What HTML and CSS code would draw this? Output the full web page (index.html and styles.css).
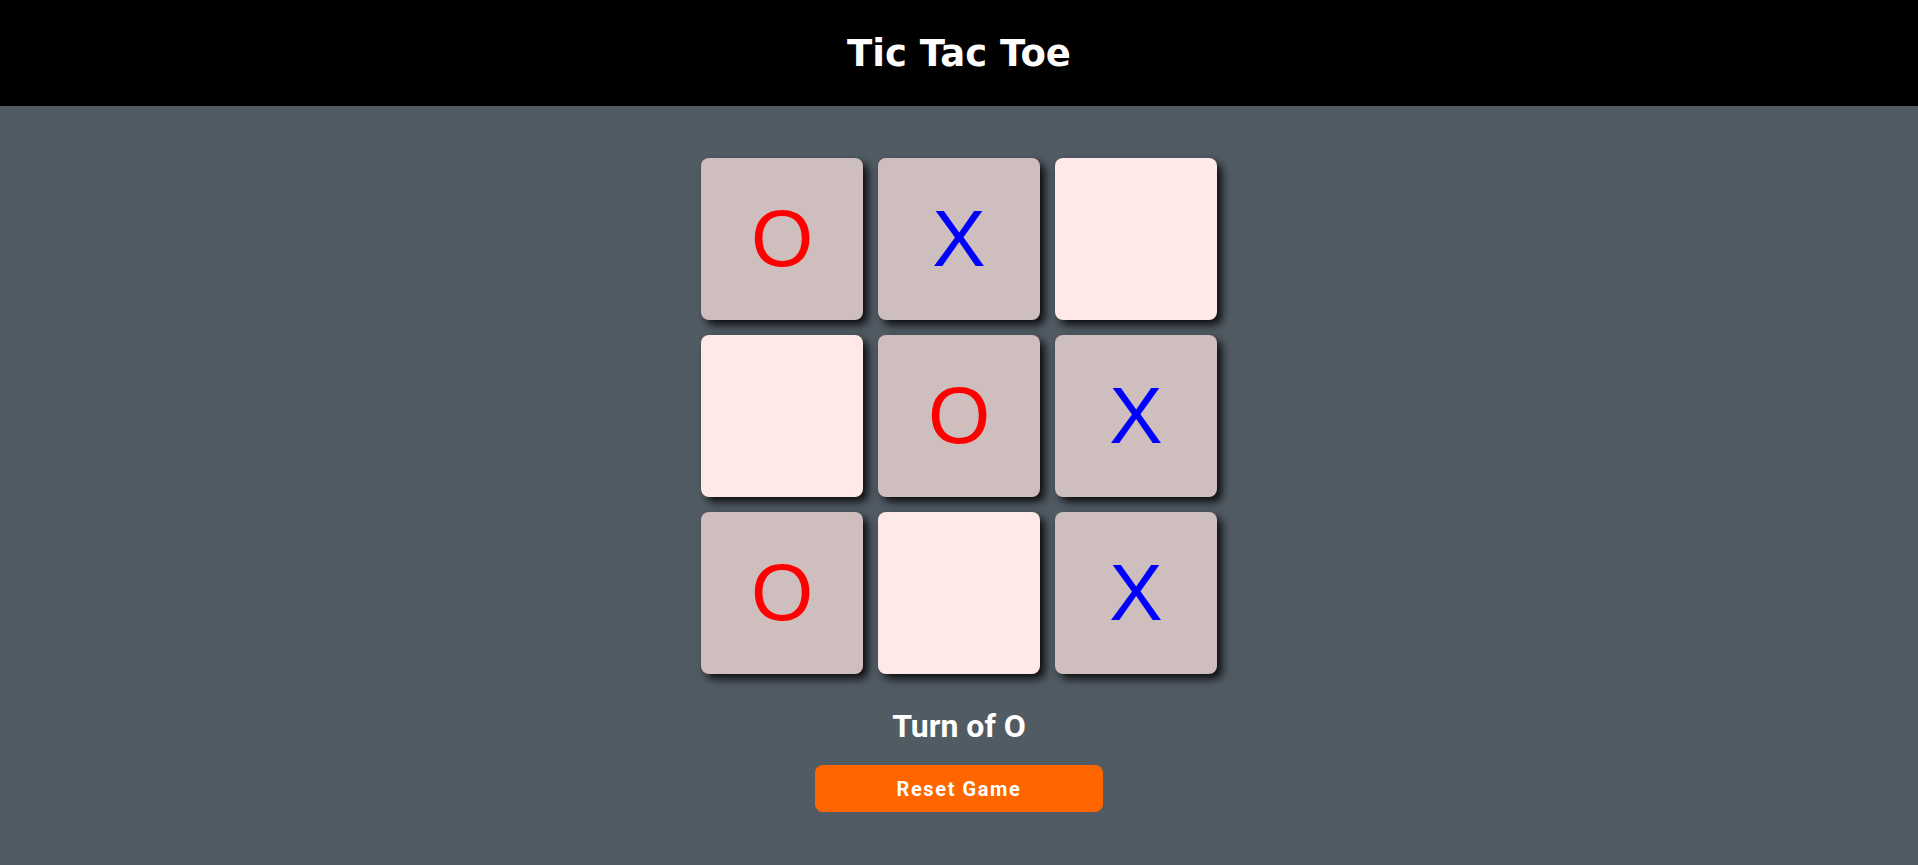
FILE: index.html
```html
<!DOCTYPE html>
<html lang="en">
<head>
<meta charset="utf-8">
<title>Tic Tac Toe</title>
<link rel="stylesheet" href="styles.css">
</head>
<body>
<header class="topbar">
  <h1 class="title">Tic Tac Toe</h1>
</header>
<main class="game">
  <div class="board">
    <button class="cell played mark-o">O</button>
    <button class="cell played mark-x">X</button>
    <button class="cell"></button>
    <button class="cell"></button>
    <button class="cell played mark-o">O</button>
    <button class="cell played mark-x">X</button>
    <button class="cell played mark-o">O</button>
    <button class="cell"></button>
    <button class="cell played mark-x">X</button>
  </div>
  <p class="turn">Turn of O</p>
  <button class="reset">Reset Game</button>
</main>
</body>
</html>
```
FILE: styles.css
```css
* { box-sizing: border-box; }

html, body {
  margin: 0;
  padding: 0;
}

body {
  background: #515b64;
  min-height: 865px;
  font-family: "Liberation Sans", Arial, sans-serif;
}

.topbar {
  background: #000;
  height: 106px;
  display: flex;
  align-items: center;
  justify-content: center;
}

.title {
  margin: 0;
  color: #fff;
  font-family: "DejaVu Sans", Verdana, sans-serif;
  font-weight: bold;
  font-size: 37px;
}

.game {
  display: flex;
  flex-direction: column;
  align-items: center;
  padding-top: 52px;
}

.board {
  display: grid;
  grid-template-columns: repeat(3, 162px);
  grid-template-rows: repeat(3, 162px);
  gap: 15px;
}

.cell {
  border: none;
  padding: 0;
  margin: 0;
  border-radius: 8px;
  background: #ffe9e8;
  box-shadow: 5px 5px 9px rgba(0, 0, 0, 0.85);
  font-family: "Liberation Sans", Arial, sans-serif;
  font-size: 80px;
  line-height: 1;
  display: flex;
  align-items: center;
  justify-content: center;
}

.played { background: #cfbebe; }
.mark-o { color: #ff0000; }
.mark-x { color: #0000ff; }

.turn {
  margin: 33px 0 0;
  color: #fff;
  font-family: Roboto, "Liberation Sans", sans-serif;
  font-weight: 700;
  font-size: 32px;
}

.reset {
  margin-top: 20px;
  width: 288px;
  height: 47px;
  border: none;
  border-radius: 8px;
  background: #ff6600;
  color: #fff;
  font-family: Roboto, "Liberation Sans", sans-serif;
  font-weight: 700;
  font-size: 20px;
  letter-spacing: 1.6px;
}
```
